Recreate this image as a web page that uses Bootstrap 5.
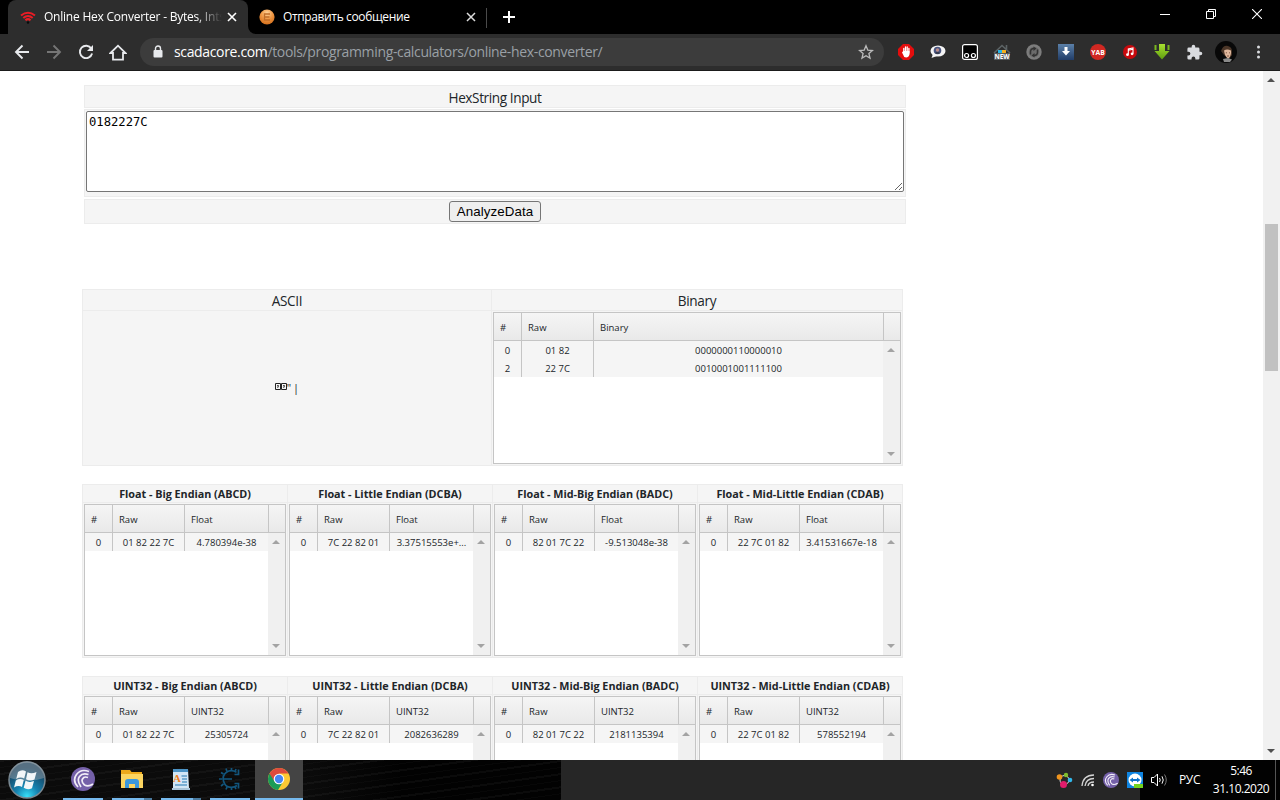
<!DOCTYPE html>
<html lang="en">
<head>
<meta charset="utf-8">
<meta name="viewport" content="width=device-width, initial-scale=1">
<title>Online Hex Converter</title>
<link href="https://cdn.jsdelivr.net/npm/bootstrap@5.3.0/dist/css/bootstrap.min.css" rel="stylesheet">
<style>
body{font-family:"Open Sans","Noto Sans",sans-serif;font-size:12px;line-height:1;color:#212529}
svg{display:block;flex:none}
.tabstrip{height:34px;background:#000;color:#fff;padding-left:8px}
.tab-on{width:240px;background:#2d2d2d;border-radius:8px 8px 0 0;padding:0 11px 0 12px}
.tab-off{width:238px;padding:0 10px 0 11px;border-bottom-left-radius:8px;background:#000}
.tab-foot{background:linear-gradient(90deg,#2d2d2d 20px,#000 20px)}
.tab-label{font-size:12px;letter-spacing:-.37px;white-space:nowrap;overflow:hidden;flex:1;line-height:16px}
.fade-label{letter-spacing:-.22px;-webkit-mask-image:linear-gradient(90deg,#000 152px,transparent 178px);mask-image:linear-gradient(90deg,#000 152px,transparent 178px)}
.tab-sep{width:1px;height:20px;background:#4a4a4a}
.win-slot{width:46px;height:28px}
.toolbar{height:37px;background:#2d2d2d;border-bottom:1px solid #1b1b1b;padding-left:6px}
.slot{width:32px;height:36px;flex:none}
.omnibox{width:744px;height:28px;margin:0 6px 0 6px;border-radius:14px;background:#3c3c3c;color:#9aa0a6;padding:0 10px 0 12px;font-size:14px;letter-spacing:-.35px}
.omnibox b{font-weight:400;color:#fff}
.url{margin-left:10px;padding-bottom:0;line-height:18px}
.viewport{flex:1;min-height:0;background:#fff}
.page{padding-left:82px;padding-top:14px;width:1263px}
.w-form{width:822px;margin-left:2px}
.strip{background:#f5f5f5;border:1px solid #ececec}
.strip-t{height:23px;font-size:13.6px;letter-spacing:-.4px;line-height:23px}
.strip-a{height:88px;margin-top:1px;padding:1px}
.strip-b{height:25px;margin-top:2px}
.hexbox{display:block;width:818px;height:81px;border:1px solid #767676;border-radius:2px;padding:3px 2px;font:12.2px/14px "DejaVu Sans Mono",monospace;letter-spacing:0;color:#000;resize:both;outline:0}
.go{width:92px;height:21px;border:1px solid #767676;border-radius:3px;background:#efefef;color:#000;font:13.33px/18px "Liberation Sans",sans-serif;letter-spacing:.1px;padding:0}
.panel-row{width:821px;border:1px solid #ececec;background:#f5f5f5}
.panel-gap-lg{margin-top:65px}
.panel-gap{margin-top:18px}
.cell+.cell{border-left:1px solid #ececec}
.ascii-cell{width:408px}
.cell-h{border-bottom:1px solid #ececec;text-align:center;white-space:nowrap}
.cell-h.big{height:21px;font-size:13.6px;letter-spacing:-.3px;line-height:22px}
.cell-h.sm{height:18px;font-size:10.8px;line-height:18px;font-weight:700;letter-spacing:-.02px}
.quarter{width:204px}.quarter+.quarter{width:205px}
.grid{height:152px;border:1px solid #c5c5c5;background:#fff;margin:1px;font-size:9.5px}
.grid-h{height:28px;border-bottom:1px solid #c5c5c5;background:linear-gradient(#f5f5f5,#e9e9e9);line-height:29px}
.grid-h div{padding-left:6px;border-right:1px solid #c5c5c5}
.grid-h div:last-child{border:0}
.rec{height:18px;line-height:19px;background:#f5f5f5;text-align:center;white-space:nowrap}
.rec div{border-right:1px solid #c5c5c5}
.rec div:last-child{border:0}
.c1{width:28px;flex:none}.c2{width:72px;flex:none}.c3{flex:1;min-width:0}.c4{width:16px;flex:none}
.sb{width:17px;height:122px;background:#f0f0f0;padding:7px 1px 7px 0}
.tri{width:0;height:0;border:4px solid transparent}
.tri.up{border-bottom-color:#a3a3a3;border-top:0}
.tri.dn{border-top-color:#a3a3a3;border-bottom:0}
.pagebar{width:17px;background:#f1f1f1;padding:7px 0 7px}
.pagebar .tri.up,.pagebar .tri.dn{margin-right:1px}
.pagebar .tri.up{border-bottom-color:#505050}.pagebar .tri.dn{border-top-color:#505050}
.thumb{width:13px;height:147px;background:#c1c1c1;margin-top:142px}
.ascii{font-size:11px;height:152px}
.taskbar{height:40px;color:#fff;background:#262626}
.wall-l{width:561px;background:repeating-linear-gradient(172deg,rgba(255,255,255,.035) 0 2px,transparent 2px 7px,rgba(255,255,255,.02) 7px 8px,transparent 8px 13px),linear-gradient(90deg,#0b0b0b 0 305px,#020202 400px)}
.wall-r{background:linear-gradient(90deg,transparent 84px,#020202 84px);width:224px}
.task{width:40px;height:40px;margin-right:9px;border-bottom:2px solid #76b9ed}
.task.first{margin-left:9px}
.task.stack{border-image:linear-gradient(90deg,#76b9ed 31px,#4b7ba0 31px) 2}
.task.on{width:48px;margin-left:-4px;background:#444}
.tray{font-size:12px;letter-spacing:-.35px}
.clock{width:60px;text-align:center;line-height:18px;letter-spacing:-.48px;white-space:nowrap}
.lang{margin-left:11px;margin-right:11px}
.peek{width:1px;height:40px;background:#555;margin:0 4px 0 4px}
</style>
</head>
<body class="vh-100 overflow-hidden d-flex flex-column">

<header class="tabstrip d-flex">
  <div class="tab-on d-flex align-items-center">
    <svg width="16" height="16" viewBox="0 0 16 16" fill="none" stroke="#ea1c25" stroke-width="2.100" class="me-2"><path d="M1 6.500Q8 1 15 6.500M3.300 9Q8 5 12.700 9M5.400 11.300Q8 9 10.600 11.300"/><circle cx="8" cy="13.500" r="1.200" fill="#0a0a0a" stroke="none"/></svg>
    <div class="tab-label fade-label">Online Hex Converter - Bytes, Ints</div>
    <svg width="10" height="10" viewBox="0 0 10 10" stroke="#fff" stroke-width="1.600"><path d="M1 1l8 8M9 1l-8 8"/></svg>
  </div>
  <div class="tab-foot"><div class="tab-off h-100 d-flex align-items-center">
    <svg width="16" height="16" viewBox="0 0 16 16" class="me-2"><defs><radialGradient id="or" cy=".25" r=".8"><stop stop-color="#ffd49a"/><stop offset=".5" stop-color="#ee9440"/><stop offset="1" stop-color="#cf6a18"/></radialGradient></defs><circle cx="8" cy="8" r="7.600" fill="url(#or)"/><path d="M11 5H5.500v6H11M5.500 8H10.500" fill="none" stroke="#c06e2a" stroke-width="1.300"/></svg>
    <div class="tab-label">Отправить сообщение</div>
    <svg width="10" height="10" viewBox="0 0 10 10" stroke="#ddd" stroke-width="1.500"><path d="M1 1l8 8M9 1l-8 8"/></svg>
  </div></div>
  <div class="tab-sep mt-2"></div>
  <svg width="12" height="34" viewBox="0 0 12 34" stroke="#fff" stroke-width="2" class="ms-3"><path d="M0 17h12M6 11v12"/></svg>
  <div class="d-flex ms-auto">
    <div class="win-slot d-flex align-items-center justify-content-center"><svg width="10" height="10" stroke="#fff"><path d="M0 5.500h10"/></svg></div>
    <div class="win-slot d-flex align-items-center justify-content-center"><svg width="10" height="10" stroke="#fff" fill="none"><path d="M.5 2.500h7v7h-7zM2.500 2.500v-2h7v7h-2"/></svg></div>
    <div class="win-slot d-flex align-items-center justify-content-center"><svg width="10" height="10" stroke="#fff" stroke-width="1.100"><path d="M0 0l10 10M10 0L0 10"/></svg></div>
  </div>
</header>

<nav class="toolbar d-flex align-items-center">
  <div class="slot d-flex align-items-center justify-content-center"><svg width="16" height="16" viewBox="0 0 16 16" fill="none" stroke="#e8eaed" stroke-width="1.900"><path d="M15 8H2M8.500 1.500L2 8l6.500 6.500"/></svg></div>
  <div class="slot d-flex align-items-center justify-content-center"><svg width="16" height="16" viewBox="0 0 16 16" fill="none" stroke="#757575" stroke-width="1.900"><path d="M1 8h13M7.500 1.500L14 8l-6.500 6.500"/></svg></div>
  <div class="slot d-flex align-items-center justify-content-center"><svg width="16" height="16" viewBox="0 0 16 16" fill="none" stroke="#e8eaed" stroke-width="1.900"><path d="M13.300 4.500A6.200 6.200 0 1 0 14.100 9.500"/><path d="M15 1v6H9z" fill="#e8eaed" stroke="none"/></svg></div>
  <div class="slot d-flex align-items-center justify-content-center"><svg width="18" height="17" viewBox="0 0 18 17" fill="none" stroke="#e8eaed" stroke-width="1.800"><path d="M1.500 9L9 1.700 16.500 9H14v6.700H4V9z"/></svg></div>
  <div class="omnibox d-flex align-items-center">
    <svg width="12" height="14" viewBox="0 0 12 14"><path d="M3.500 6V3.500a2.500 2.500 0 0 1 5 0V6" fill="none" stroke="#e8eaed" stroke-width="1.400"/><rect x="1.500" y="5" width="9" height="7.500" rx="1" fill="#e8eaed"/></svg>
    <span class="url"><b>scadacore.com</b>/tools/programming-calculators/online-hex-converter/</span>
    <svg width="16" height="16" viewBox="0 0 16 16" fill="none" stroke="#bbb" stroke-width="1.300" class="ms-auto"><path d="M8 1.800l1.800 4.300 4.600.4-3.500 3 1.100 4.600L8 11.700l-4 2.400 1.100-4.600-3.500-3 4.600-.4z"/></svg>
  </div>
  <div class="slot d-flex align-items-center justify-content-center"><svg width="16" height="16" viewBox="0 0 16 16"><path d="M5 0h6l5 5v6l-5 5H5l-5-5V5z" fill="#e40d0d"/><path d="M5.800 9V4.500M7.500 8V3M9.200 8V3M10.900 9V4.500" stroke="#fff" stroke-width="1.300" stroke-linecap="round"/><path d="M5.200 7h6.300v3.500q-.8 3-3.300 3T5.300 11L4 8.500z" fill="#fff"/></svg></div>
  <div class="slot d-flex align-items-center justify-content-center"><svg width="16" height="16" viewBox="0 0 16 16"><ellipse cx="8" cy="7" rx="7.500" ry="5.600" fill="#f4f4f4"/><path d="M3 10l-1.500 4L7 12z" fill="#f4f4f4"/><circle cx="7.500" cy="6.500" r="3.800" fill="#4a5680"/><circle cx="7.500" cy="6" r="1.700" fill="#b98b86"/><path d="M5.500 9h4" stroke="#222"/></svg></div>
  <div class="slot d-flex align-items-center justify-content-center"><svg width="16" height="16" viewBox="0 0 16 16" fill="none" stroke="#fff"><rect x=".6" y=".6" width="14.800" height="14.800" rx="2" fill="#000" stroke-width="1.200"/><circle cx="4.600" cy="11.500" r="2" stroke-width="1.200"/><circle cx="11.400" cy="11.500" r="2" stroke-width="1.200"/></svg></div>
  <div class="slot d-flex align-items-center justify-content-center"><svg width="18" height="16" viewBox="0 0 18 16"><path d="M1 9l8-7.500L17 9M13.500 1v4" fill="none" stroke="#5c6365" stroke-width="1.600"/><path d="M5 7.500h4" stroke="#26b5e8" stroke-width="3"/><path d="M9 7.500h4" stroke="#f5b01c" stroke-width="3"/><rect x="1" y="9" width="16" height="7" fill="#555b5d"/><text x="9" y="15.200" font-size="6.500" font-weight="700" fill="#fff" text-anchor="middle" font-family="Open Sans" textLength="15">NEW</text></svg></div>
  <div class="slot d-flex align-items-center justify-content-center"><svg width="16" height="16" viewBox="0 0 16 16"><circle cx="8" cy="8" r="7.700" fill="#7d7d7d"/><circle cx="8" cy="8" r="5.300" fill="#6b6b6b"/><path d="M4.500 10.500V8Q4.500 4.500 8 4.500M11.500 5.500v2.500Q11.500 11.500 8 11.500" fill="none" stroke="#333" stroke-width="1.500"/><path d="M7.500 2.500l3 2-3 2.500zM8.500 9l-3 2.500 3 2z" fill="#333"/></svg></div>
  <div class="slot d-flex align-items-center justify-content-center"><svg width="16" height="16" viewBox="0 0 16 16"><defs><linearGradient id="bl" x2="0" y2="1"><stop stop-color="#5b80a8"/><stop offset="1" stop-color="#213d68"/></linearGradient></defs><rect width="16" height="16" fill="url(#bl)"/><path d="M6.500 3h3v4H12l-4 4.500L4 7h2.500z" fill="#fff"/></svg></div>
  <div class="slot d-flex align-items-center justify-content-center"><svg width="16" height="16" viewBox="0 0 16 16"><circle cx="8" cy="8" r="8" fill="#d02822"/><text x="8" y="10.500" font-size="6.800" font-weight="700" fill="#fff" text-anchor="middle" font-family="Open Sans" textLength="13.500">YAB</text></svg></div>
  <div class="slot d-flex align-items-center justify-content-center"><svg width="14" height="14" viewBox="0 0 14 14"><circle cx="7" cy="7" r="7" fill="#c8090d"/><path d="M5.300 9.500V4L10 3v5.500M5.300 5.200L10 4.200" fill="none" stroke="#fff" stroke-width="1.100"/><circle cx="4.500" cy="9.700" r="1.400" fill="#fff"/><circle cx="9.100" cy="8.800" r="1.400" fill="#fff"/></svg></div>
  <div class="slot d-flex align-items-center justify-content-center"><svg width="16" height="16" viewBox="0 0 16 16"><defs><linearGradient id="gr" x2="0" y2="1"><stop stop-color="#a8e030"/><stop offset="1" stop-color="#5f9d10"/></linearGradient></defs><path d="M5 0h6v7h4.500L8 15.500.5 7H5z" fill="url(#gr)"/><path d="M1.500 1v5M14.500 1v5" stroke="#79b51e" stroke-width="2"/><path d="M4 0v6M12 0v6" stroke="#2d2d2d"/></svg></div>
  <div class="slot d-flex align-items-center justify-content-center"><svg width="17" height="17" viewBox="0 0 24 24" fill="#dadce0"><path d="M20.500 11H19V7a2 2 0 0 0-2-2h-4V3.500a2.500 2.500 0 0 0-5 0V5H4a2 2 0 0 0-2 2v3.800h1.500a2.700 2.700 0 0 1 0 5.400H2V20a2 2 0 0 0 2 2h3.800v-1.500a2.700 2.700 0 0 1 5.400 0V22H17a2 2 0 0 0 2-2v-4h1.500a2.500 2.500 0 0 0 0-5z"/></svg></div>
  <div class="slot d-flex align-items-center justify-content-center"><svg width="22" height="22" viewBox="0 0 22 22"><circle cx="11" cy="11" r="11" fill="#080808"/><path d="M6 10Q8 4 13 5q5 1 4 9l-3 4-5-4z" fill="#4b3628"/><path d="M9 9.500q3-2 7 0 .5 5-2.500 8-3.500-1-4.500-8z" fill="#e0b79c"/><path d="M10.800 11.800h1.200M14 11.800h1M12 15h2" stroke="#6b4231" stroke-width=".8"/><path d="M8 18l5-1 4 1.500-2 2.500H9z" fill="#8a8a8a"/></svg></div>
  <div class="slot d-flex align-items-center justify-content-center"><svg width="4" height="14" fill="#dadce0"><circle cx="2.500" cy="2" r="1.500"/><circle cx="2.500" cy="7" r="1.500"/><circle cx="2.500" cy="12" r="1.500"/></svg></div>
</nav>

<div class="viewport d-flex overflow-hidden">
<main class="page overflow-hidden">
  <section class="w-form text-center">
    <div class="strip strip-t">HexString Input</div>
    <div class="strip strip-a"><textarea class="hexbox" spellcheck="false">0182227C</textarea></div>
    <div class="strip strip-b d-flex justify-content-center align-items-center"><button class="go" type="button">AnalyzeData</button></div>
  </section>

  <section class="panel-row panel-gap-lg d-flex">
    <div class="cell ascii-cell">
      <div class="cell-h big">ASCII</div>
      <div class="ascii d-flex align-items-center justify-content-center">
        <svg width="12" height="8" viewBox="0 0 12 8" fill="none" stroke="#222"><path d="M.5.5h5v6h-5zM6.500.5h5v6h-5z"/><path d="M2 2.500h1.500v1H2.800v1.500M8 2.500h1.500v1H8.800v1.500" stroke-width=".8"/></svg>
        <span>"&thinsp;|</span>
      </div>
    </div>
    <div class="cell flex-fill">
      <div class="cell-h big">Binary</div>
      <div class="grid">
        <div class="grid-h d-flex"><div class="c1">#</div><div class="c2">Raw</div><div class="c3">Binary</div><div class="c4"></div></div>
        <div class="d-flex">
          <div class="flex-fill">
            <div class="rec d-flex"><div class="c1">0</div><div class="c2">01 82</div><div class="c3">0000000110000010</div></div>
            <div class="rec d-flex"><div class="c1">2</div><div class="c2">22 7C</div><div class="c3">0010001001111100</div></div>
          </div>
          <div class="sb d-flex flex-column align-items-center justify-content-between"><i class="tri up"></i><i class="tri dn"></i></div>
        </div>
      </div>
    </div>
  </section>

  <div id="groups"></div>
</main>
<div class="pagebar d-flex flex-column align-items-center"><i class="tri up"></i><i class="thumb"></i><i class="tri dn mt-auto"></i></div>
</div>

<footer class="taskbar d-flex">
  <div class="wall-l d-flex">
  <svg width="54" height="40" viewBox="0 0 54 40"><defs><radialGradient id="st" cy=".95" r=".8"><stop stop-color="#37e0f8"/><stop offset=".4" stop-color="#1582b0"/><stop offset="1" stop-color="#173c57"/></radialGradient></defs><circle cx="27" cy="20" r="18" fill="url(#st)" stroke="#7a8891" stroke-width="1.500"/><path d="M10 18a17 17 0 0 1 34 0Q27 24 10 18z" fill="#8a9aa5" opacity=".55"/><path d="M18 12q4-3 8-.5l-1.800 7q-4-2-8 .5zM27.500 12.300q4 2 9-.3l-2 7.500q-4.500 2-8.500-.3zM15.800 20.500q4-2.500 8-.5l-1.800 7q-3.500-2-8 .5zM25.500 20.800q4 2 8.500.3l-2 7.200q-4.500 2-8.300-.5z" fill="#f2f6f8"/></svg>
  <div class="task first d-flex align-items-center justify-content-center"><svg width="24" height="24" viewBox="0 0 24 24"><circle cx="12" cy="12" r="12" fill="#7460a8"/><path d="M18 4.500Q10 1.500 5.500 7.500t1.500 12.500M17.500 7.500q-6-2-9 2t1.500 10.500M17 10.500q-4-1.500-5.500 1.500t2 6q4 2 8.500-1" fill="none" stroke="#f1edf7" stroke-width="1.700"/></svg></div>
  <div class="task stack d-flex align-items-center justify-content-center"><svg width="22" height="20" viewBox="0 0 22 20"><path d="M0 1h9l1.500 2H21v15H0z" fill="#eda91b"/><path d="M0 5h22v14H0z" fill="#fbd460"/><path d="M4 19v-6q0-3 3-3h8q3 0 3 3v6h-4v-4H8v4z" fill="#3b98dc"/></svg></div>
  <div class="task stack d-flex align-items-center justify-content-center"><svg width="20" height="22" viewBox="0 0 20 22"><path d="M2 1h15l1 19H2z" fill="#d3e6f5"/><path d="M2 1h15v3H2z" fill="#4c93c5"/><path d="M10.500 8h5.500M11 11h5M11 14h5M4 17h12" stroke="#5d9cc7" stroke-width="1.300"/><text x="2" y="14" font-size="11" font-weight="700" fill="#ee7f22" font-family="Liberation Serif">A</text><path d="M1 20h18v2H1z" fill="#a9c4d8"/></svg></div>
  <div class="task d-flex align-items-center justify-content-center"><svg width="22" height="24" viewBox="0 0 22 24" fill="none" stroke="#12557c"><path d="M17.500 5.200Q12 2 7.500 5.200T4.500 14t6 6.200T18 18.500" stroke-width="1.700"/><path d="M4 12h9" stroke-width="1.600"/><path d="M19.500 2.500v5h-4M19.500 21.500v-5h-4M4.500 7L2 5.500M3.500 12H0M4.500 17L2 19M8 4.500L7 1.500M12.500 3.500V1M8 20L7 22.500M12.500 20.500V23M16 4.500l1-2.500M16 20l1 2" stroke-width="1.700"/></svg></div>
  <div class="task on d-flex align-items-center justify-content-center"><svg width="24" height="24" viewBox="0 0 24 24"><circle cx="12" cy="12" r="11" fill="#fcc934"/><path d="M12 12L2.500 6.500A11 11 0 0 0 11 23l5.500-9z" fill="#1a9c57"/><path d="M2.500 6.500A11 11 0 0 1 21.500 6.500H12L7.500 14.500z" fill="#dd4b3e"/><circle cx="12" cy="12" r="5.300" fill="#fff"/><circle cx="12" cy="12" r="4.200" fill="#4585f3"/></svg></div>
  </div>
  <div class="wall-r tray ms-auto d-flex align-items-center justify-content-end">
    <svg width="17" height="17" viewBox="0 0 17 17"><circle cx="8.500" cy="8" r="4.500" fill="none" stroke="#ddd"/><circle cx="3.500" cy="5" r="2.800" fill="#ef941d"/><circle cx="10" cy="3" r="2.200" fill="#7fbe2c"/><circle cx="14" cy="8" r="2.300" fill="#31b8ec"/><circle cx="7.500" cy="12.500" r="3.500" fill="#e01c6c"/></svg>
    <svg width="14" height="14" viewBox="0 0 14 14" class="ms-2 me-2" fill="none" stroke="#d4d4d4" stroke-width="1.300"><path d="M1 13Q2 2 13 2M4 13Q5 5.500 13 5.500M7 13q.5-4 6-4"/><circle cx="11.500" cy="12" r="1.300" fill="#fff" stroke="none"/></svg>
    <svg width="16" height="16" viewBox="0 0 24 24"><circle cx="12" cy="12" r="12" fill="#7460a8"/><path d="M18 4.500Q10 1.500 5.500 7.500t1.500 12.500M17.500 7.500q-6-2-9 2t1.500 10.500M17 10.500q-4-1.500-5.500 1.500t2 6q4 2 8.500-1" fill="none" stroke="#f1edf7" stroke-width="1.700"/></svg>
    <svg width="16" height="16" viewBox="0 0 16 16" class="ms-2"><rect width="16" height="16" fill="#0f85e2"/><circle cx="8" cy="8" r="6.500" fill="#fff"/><path d="M2.500 8l3.500-2.500V7h4V5.500L13.500 8 10 10.500V9H6v1.500z" fill="#0f75cc"/><rect x="7" y="12" width="9" height="4" fill="#72d320"/></svg>
    <svg width="17" height="16" viewBox="0 0 17 16" fill="none" stroke="#fff" class="ms-2"><path d="M.5 5.500H3l3.500-3.500v12L3 10.500H.5zM8.500 6q1.500 2 0 4M11 4.300q2.500 3.700 0 7.400"/><path d="M13.500 2.500q3.500 5.500 0 11" stroke="#777"/></svg>
    <span class="lang">РУС</span>
    <div class="clock">5:46<br>31.10.2020</div>
    <div class="peek"></div>
  </div>
</footer>

<script src="https://cdn.jsdelivr.net/npm/bootstrap@5.3.0/dist/js/bootstrap.bundle.min.js"></script>
<script>
// One row of four byte-order panels per numeric type
const orders = [['Big Endian (ABCD)','01 82 22 7C'],['Little Endian (DCBA)','7C 22 82 01'],['Mid-Big Endian (BADC)','82 01 7C 22'],['Mid-Little Endian (CDAB)','22 7C 01 82']];
const types = {
  'Float': ['4.780394e-38','3.37515553e+...','-9.513048e-38','3.41531667e-18'],
  'UINT32': ['25305724','2082636289','2181135394','578552194']
};
document.getElementById('groups').innerHTML = Object.entries(types).map(([t, vals]) => `
  <section class="panel-row panel-gap d-flex">${orders.map(([o, raw], i) => `
    <div class="cell quarter">
      <div class="cell-h sm">${t} - ${o}</div>
      <div class="grid">
        <div class="grid-h d-flex"><div class="c1">#</div><div class="c2">Raw</div><div class="c3">${t}</div><div class="c4"></div></div>
        <div class="d-flex">
          <div class="flex-fill"><div class="rec d-flex"><div class="c1">0</div><div class="c2">${raw}</div><div class="c3">${vals[i]}</div></div></div>
          <div class="sb d-flex flex-column align-items-center justify-content-between"><i class="tri up"></i><i class="tri dn"></i></div>
        </div>
      </div>
    </div>`).join('')}
  </section>`).join('');
</script>
</body>
</html>
